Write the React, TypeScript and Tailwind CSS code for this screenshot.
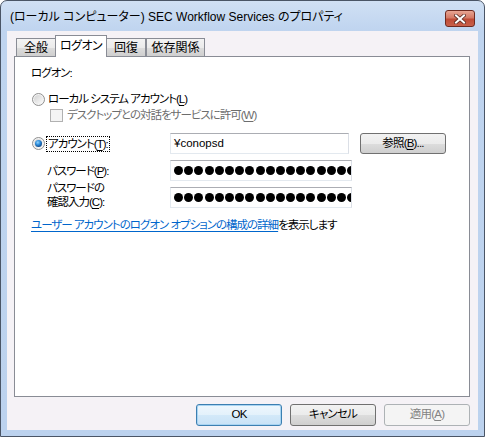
import React from 'react';

const font = "font-['Liberation_Sans','Noto_Sans_CJK_JP',sans-serif] [font-feature-settings:'palt']";

function Radio({ checked }: { checked?: boolean }) {
  return (
    <svg width="13" height="13" viewBox="0 0 13 13" className="shrink-0">
      <defs>
        <linearGradient id={checked ? 'rfc' : 'rfu'} x1="0" y1="0" x2="1" y2="1">
          <stop offset="0" stopColor="#d2d2d2" />
          <stop offset="1" stopColor="#fbfbfb" />
        </linearGradient>
        <radialGradient id="dot" cx="0.4" cy="0.35" r="0.7">
          <stop offset="0" stopColor="#8fd3ff" />
          <stop offset="0.5" stopColor="#2a8ad8" />
          <stop offset="1" stopColor="#0b3f80" />
        </radialGradient>
      </defs>
      <circle cx="6.5" cy="6.5" r="6" fill="#f4f4f4" stroke="#8f8f8f" strokeWidth="1" />
      <circle cx="6.5" cy="6.5" r="4.5" fill={`url(#${checked ? 'rfc' : 'rfu'})`} />
      {checked && <circle cx="6.5" cy="6.5" r="3.5" fill="url(#dot)" />}
    </svg>
  );
}

function U({ c }: { c: string }) {
  return <span className="underline underline-offset-2">{c}</span>;
}

function Btn({ children, variant = 'normal', className = '' }: { children: React.ReactNode; variant?: 'normal' | 'default' | 'disabled'; className?: string }) {
  const styles = {
    normal: 'border-[#707070] bg-[linear-gradient(to_bottom,#f2f2f2_0%,#ebebeb_50%,#dddddd_50%,#cfcfcf_100%)] text-black',
    default: 'border-[#3c7fb1] bg-[linear-gradient(to_bottom,#eef7fd_0%,#e3f1fb_50%,#d3e9f9_50%,#c8e2f6_100%)] text-black shadow-[inset_0_0_0_1px_#a8d4f2]',
    disabled: 'border-[#adb2b5] bg-[#f4f4f4] text-[#838383]',
  }[variant];
  return (
    <div className={`flex w-[86px] items-center justify-center rounded-[3px] border text-[11.5px] leading-none tracking-[-0.8px] ${styles} ${className}`}>
      {children}
    </div>
  );
}

function TextBox({ children, w }: { children?: React.ReactNode; w: string }) {
  return (
    <div className={`flex h-[21px] ${w} items-center overflow-hidden border border-[#abadb3] border-b-[#e3e9ef] border-l-[#e3e9ef] border-r-[#dbdfe6] bg-white pl-[3px]`}>
      {children}
    </div>
  );
}

function Dots() {
  return (
    <div className="flex gap-[1.2px] overflow-hidden">
      {Array.from({ length: 18 }).map((_, i) => (
        <div key={i} className="h-[9px] w-[9px] shrink-0 rounded-full bg-black" />
      ))}
    </div>
  );
}

const tabs = [
  { label: '全般', w: 'w-[40px]' },
  { label: 'ログオン', w: 'w-[52px]', active: true },
  { label: '回復', w: 'w-[40px]' },
  { label: '依存関係', w: 'w-[59px]' },
];

export default function App() {
  return (
    <div className={`h-[437px] w-[485px] bg-white text-[12px] text-black ${font}`}>
      <div className="flex h-full w-full flex-col rounded-t-[7px] border border-[#4a5566] bg-[linear-gradient(to_bottom,#d0e0f4_0px,#bfd4ef_30px,#bcd2ee_100%)]">
        {/* title bar */}
        <div className="flex h-[30px] items-start justify-between pl-[9px] pr-[9px] pt-[8px]">
          <span className="text-[12px] leading-[16px]">(ローカル コンピューター) SEC Workflow Services のプロパティ</span>
          <div className="mt-[1px] flex h-[17px] w-[30px] items-center justify-center rounded-[3px] border border-[#6e2a20] bg-[linear-gradient(to_bottom,#e8a593_0%,#d47a66_45%,#bf4b36_55%,#c8604a_100%)]">
            <svg width="12" height="10" viewBox="0 0 12 10">
              <path d="M2 1.5 L10 8.5 M10 1.5 L2 8.5" stroke="#5a2a22" strokeWidth="3.6" strokeLinecap="square" />
              <path d="M2 1.5 L10 8.5 M10 1.5 L2 8.5" stroke="#ffffff" strokeWidth="2" strokeLinecap="square" />
            </svg>
          </div>
        </div>

        {/* client area */}
        <div className="mx-[6px] mb-[6px] flex flex-1 flex-col bg-[#f5f2f6] pt-[4px]">
          <div className="ml-[9px] flex items-end">
            {tabs.map((t) =>
              t.active ? (
                <div key={t.label} className={`relative z-10 -mx-[1px] -mb-px flex h-[22px] ${t.w} items-start justify-center border border-b-0 border-[#898c95] bg-white pt-[3px] leading-[14px] tracking-[-0.5px]`}>
                  {t.label}
                </div>
              ) : (
                <div key={t.label} className={`flex h-[18px] ${t.w} items-center justify-center border border-b-0 border-[#898c95] bg-[linear-gradient(to_bottom,#f3f3f3_0%,#ebebeb_50%,#dddddd_50%,#cfcfcf_100%)] pt-[1px] leading-[14px]`}>
                  {t.label}
                </div>
              )
            )}
          </div>

          <div className="ml-[7px] mr-[8px] flex h-[341px] flex-col border border-[#898c95] bg-white pl-[16px] pt-[8px] text-[11.5px] tracking-[-1px]">
            <div className="h-[16px] leading-[16px]">ログオン:</div>

            <div className="mt-[10px] flex h-[16px] items-center">
              <div className="ml-[1px] mr-[3px]"><Radio /></div>
              <span className="leading-[16px]">ローカル システム アカウント(<U c="L" />)</span>
            </div>

            <div className="ml-[19px] flex h-[16px] items-center">
              <div className="mr-[4px] h-[13px] w-[13px] border border-[#b1b1b1] bg-[#f4f4f4]" />
              <span className="leading-[16px] text-[#6d6d6d]">デスクトップとの対話をサービスに許可(<U c="W" />)</span>
            </div>

            <div className="mt-[10px] flex items-center">
              <div className="flex w-[139px] items-center">
                <div className="ml-[1px] mr-[2px]"><Radio checked /></div>
                <span className="px-[1px] leading-[14px] outline-1 outline-dotted outline-black">アカウント(<U c="T" />):</span>
              </div>
              <TextBox w="w-[179px]"><span className="tracking-normal">¥conopsd</span></TextBox>
              <Btn className="ml-[11px] h-[21px]">参照(<U c="B" />)...</Btn>
            </div>

            <div className="mt-[6px] flex items-center">
              <div className="w-[139px] pl-[16px] leading-[16px]">パスワード(<U c="P" />):</div>
              <TextBox w="w-[182px]"><Dots /></TextBox>
            </div>

            <div className="mt-[6px] flex items-start">
              <div className="-mt-[6px] w-[139px] pl-[16px] leading-[14px]">
                パスワードの<br />確認入力(<U c="C" />):
              </div>
              <TextBox w="w-[182px]"><Dots /></TextBox>
            </div>

            <div className="mt-[8px] leading-[16px]">
              <span className="text-[#0066cc] underline underline-offset-2">ユーザー アカウントのログオン オプションの構成の詳細</span>を表示します
            </div>
          </div>

          <div className="mr-[8px] mt-[7px] flex justify-end gap-[8px]">
            <Btn variant="default" className="h-[22px]">OK</Btn>
            <Btn className="h-[22px]">キャンセル</Btn>
            <Btn variant="disabled" className="h-[22px]">適用(<U c="A" />)</Btn>
          </div>
        </div>
      </div>
    </div>
  );
}
